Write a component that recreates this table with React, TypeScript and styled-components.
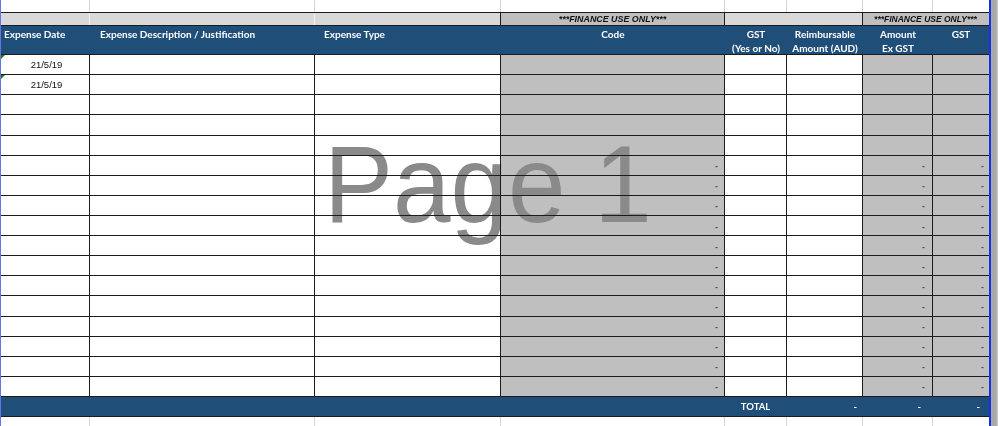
import styled, { createGlobalStyle, css } from "styled-components";

const COLS = "89px 225px 186px 224px 62px 76px 70px 56px";

const BLUE = "#1f4e79";
const FINANCE = "#bfbfbf";
const LIGHT = "#d9d9d9";
const LINE = "#1c1c1c";
const GRID = "#d4d4d4";

type Align = "left" | "center" | "right";

interface HeadCol {
  lines: string[];
  align: Align;
  pad?: string;
}

const headCols: HeadCol[] = [
  { lines: ["Expense Date"], align: "left", pad: "0 0 0 3px" },
  { lines: ["Expense Description / Justification"], align: "left", pad: "0 0 0 10px" },
  { lines: ["Expense Type"], align: "left", pad: "0 0 0 9px" },
  { lines: ["Code"], align: "center" },
  { lines: ["GST", "(Yes or No)"], align: "center" },
  { lines: ["Reimbursable", "Amount (AUD)"], align: "center" },
  { lines: ["Amount", "Ex GST"], align: "center" },
  { lines: ["GST"], align: "center" },
];

// finance columns are shaded grey in every data row
const financeCols = [3, 6, 7];
const dashPad: Record<number, string> = { 3: "6px", 6: "7px", 7: "4px" };

const rows = Array.from({ length: 17 }, (_, i) => ({
  date: i < 2 ? "21/5/19" : "",
  dashes: i >= 5,
}));

function App() {
  return (
    <>
      <GlobalStyle />
      <Screen>
        <Sheet>
          <Row $h="12px">
            {headCols.map((_, i) => (
              <Cell key={i} $line={i === 7 ? "none" : "grid"} />
            ))}
          </Row>

          <BandRow>
            <Cell $bg={LIGHT} $line="soft" />
            <Cell $bg={LIGHT} $line="soft" />
            <Cell $bg={LIGHT} $line="dark" />
            <Cell $bg={FINANCE} $line="dark" $align="center">
              <Note $size="8.9px">***FINANCE USE ONLY***</Note>
            </Cell>
            <Cell $bg={LIGHT} $line="dark" $span={2} />
            <Cell $bg={FINANCE} $line="none" $span={2} $align="center">
              <Note $size="8.5px">***FINANCE USE ONLY***</Note>
            </Cell>
          </BandRow>

          <HeadRow>
            {headCols.map((c, i) => (
              <HeadCell key={i} $align={c.align} $pad={c.pad}>
                {c.lines.map((l) => (
                  <span key={l}>{l}</span>
                ))}
              </HeadCell>
            ))}
          </HeadRow>

          {rows.map((r, ri) => (
            <Row key={ri} $h="20.12px" $ruled>
              {headCols.map((_, ci) => {
                const fin = financeCols.includes(ci);
                return (
                  <Cell
                    key={ci}
                    $bg={fin ? FINANCE : "#fff"}
                    $line={ci === 7 ? "none" : "dark"}
                    $align={ci === 0 ? "center" : "right"}
                    $padR={fin ? dashPad[ci] : undefined}
                  >
                    {ci === 0 && r.date && (
                      <>
                        <Flag />
                        <Value $shift="3px">{r.date}</Value>
                      </>
                    )}
                    {fin && r.dashes && <Dash>-</Dash>}
                  </Cell>
                );
              })}
            </Row>
          ))}

          <TotalRow>
            <Cell $span={4} $line="none" />
            <Cell $line="none" $align="center">
              <TotalText>TOTAL</TotalText>
            </Cell>
            <Cell $line="none" $align="right" $padR="5px">
              <TotalText>-</TotalText>
            </Cell>
            <Cell $line="none" $align="right" $padR="11px">
              <TotalText>-</TotalText>
            </Cell>
            <Cell $line="none" $align="right" $padR="8px">
              <TotalText>-</TotalText>
            </Cell>
          </TotalRow>

          <Row $h="9px">
            {headCols.map((_, i) => (
              <Cell key={i} $line={i === 7 ? "none" : "grid"} />
            ))}
          </Row>

          <Watermark>Page 1</Watermark>
        </Sheet>
        <OffPage />
      </Screen>
    </>
  );
}

export default App;

const GlobalStyle = createGlobalStyle`
  html,
  body {
    margin: 0;
    padding: 0;
    background: #fff;
    font-family: "Liberation Sans", Arial, sans-serif;
  }

  * {
    box-sizing: border-box;
  }
`;

const Screen = styled.div`
  display: flex;
  width: 998px;
  height: 426px;
  overflow: hidden;
`;

const Sheet = styled.div`
  position: relative;
  width: 991px;
  height: 426px;
  border-left: 1px solid #6476e6;
  border-right: 2px solid #1530e8;
  display: flex;
  flex-direction: column;
`;

const OffPage = styled.div`
  flex: 1;
  background: linear-gradient(90deg, #a9a9a9 0, #a9a9a9 5px, #cfcfcf 7px);
`;

const Row = styled.div<{ $h: string; $ruled?: boolean }>`
  display: grid;
  grid-template-columns: ${COLS};
  height: ${(p) => p.$h};
  flex-shrink: 0;
  ${(p) =>
    p.$ruled &&
    css`
      border-bottom: 1px solid ${LINE};
    `}
`;

const BandRow = styled.div`
  display: grid;
  grid-template-columns: ${COLS};
  height: 13px;
  border-top: 1px solid ${LINE};
  border-bottom: 1px solid ${LINE};
  box-sizing: content-box;
`;

const HeadRow = styled.div`
  display: grid;
  grid-template-columns: ${COLS};
  height: 29px;
  background: ${BLUE};
  border-bottom: 1px solid ${LINE};
  flex-shrink: 0;
`;

const TotalRow = styled.div`
  display: grid;
  grid-template-columns: ${COLS};
  height: 21px;
  background: ${BLUE};
  border-bottom: 1px solid ${LINE};
  margin-top: -1px;
  border-top: 1px solid ${LINE};
  flex-shrink: 0;
`;

interface CellProps {
  $bg?: string;
  $line?: "dark" | "soft" | "grid" | "none";
  $align?: Align;
  $span?: number;
  $padR?: string;
}

const lineColor = {
  dark: LINE,
  soft: "#f3f3f3",
  grid: GRID,
  none: "transparent",
};

const Cell = styled.div<CellProps>`
  position: relative;
  display: flex;
  align-items: center;
  justify-content: ${(p) =>
    p.$align === "center" ? "center" : p.$align === "right" ? "flex-end" : "flex-start"};
  background: ${(p) => p.$bg || "transparent"};
  border-right: 1px solid ${(p) => lineColor[p.$line || "dark"]};
  grid-column: ${(p) => (p.$span ? `span ${p.$span}` : "auto")};
  padding-right: ${(p) => p.$padR || "0"};
  overflow: hidden;
  white-space: nowrap;
`;

const HeadCell = styled.div<{ $align: Align; $pad?: string }>`
  display: flex;
  flex-direction: column;
  align-items: ${(p) => (p.$align === "center" ? "center" : "flex-start")};
  padding: ${(p) => p.$pad || "0"};
  padding-top: 1px;
  color: #fff;
  font-family: Lato, "Liberation Sans", sans-serif;
  font-weight: 700;
  font-size: 10px;
  line-height: 14px;
  white-space: nowrap;
`;

const Note = styled.span<{ $size: string }>`
  font-size: ${(p) => p.$size};
  font-weight: 700;
  font-style: italic;
  color: #111;
  line-height: 12px;
`;

const Value = styled.span<{ $shift?: string }>`
  font-size: 9.5px;
  color: #111;
  margin-left: ${(p) => p.$shift || "0"};
`;

const Dash = styled.span`
  font-size: 9px;
  font-weight: 700;
  color: #555;
  padding-top: 2px;
`;

const Flag = styled.span`
  position: absolute;
  top: 0;
  left: 0;
  width: 0;
  height: 0;
  border-top: 4px solid #1f7a1f;
  border-right: 4px solid transparent;
`;

const TotalText = styled.span`
  color: #fff;
  font-family: Lato, "Liberation Sans", sans-serif;
  font-weight: 700;
  font-size: 9.5px;
`;

const Watermark = styled.div`
  position: absolute;
  left: 323px;
  top: 129px;
  font-family: "Liberation Sans", Arial, sans-serif;
  font-size: 110px;
  line-height: 110px;
  color: #8a8a8a;
  mix-blend-mode: darken;
  transform: scaleX(0.94);
  transform-origin: left top;
  pointer-events: none;
  white-space: nowrap;
`;
